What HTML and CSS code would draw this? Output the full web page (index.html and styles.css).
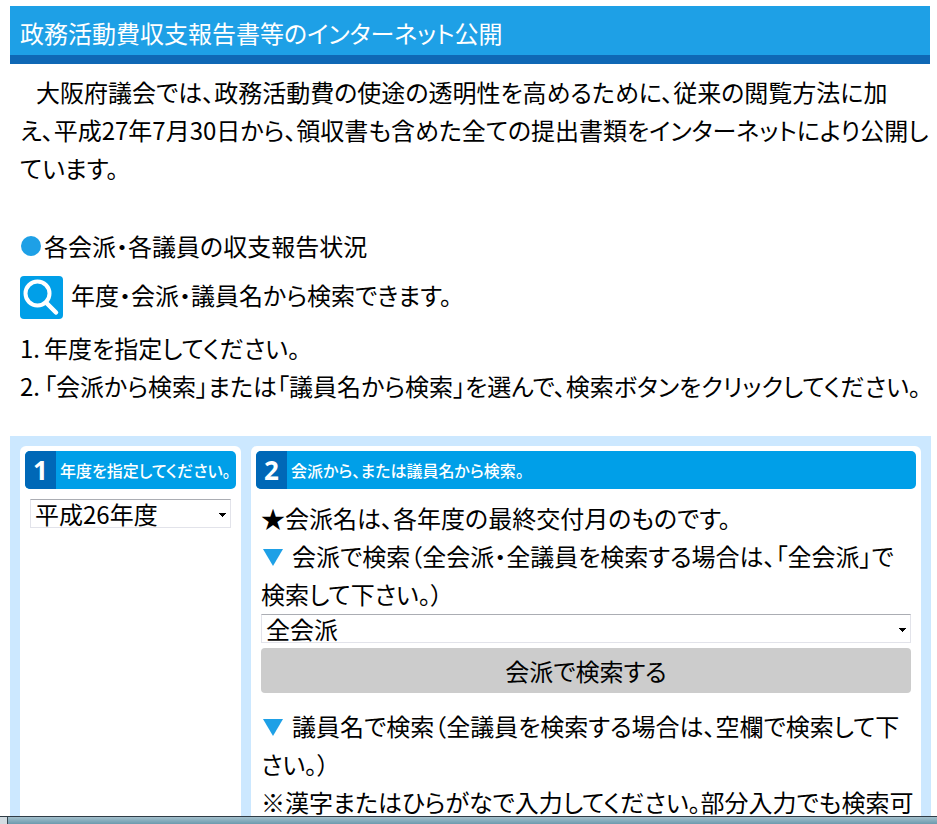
FILE: index.html
```html
<!DOCTYPE html>
<html lang="ja">
<head>
<meta charset="utf-8">
<title>政務活動費収支報告書等のインターネット公開</title>
<link rel="stylesheet" href="styles.css">
</head>
<body>
<main class="page">
  <h1 class="title">政務活動費収支報告書等のインターネット公開</h1>
  <div class="intro">
    <p class="lead">大阪府議会では、政務活動費の使途の透明性を高めるために、従来の閲覧方法に加<br>え、平成27年7月30日から、領収書も含めた全ての提出書類をインターネットにより公開し<br>ています。</p>
    <h2 class="status"><span class="dot"></span>各会派・各議員の収支報告状況</h2>
    <p class="guide">
      <svg class="guide-icon" viewBox="0 0 43 43" aria-hidden="true">
        <rect width="43" height="43" rx="4" fill="#009fe8"/>
        <circle cx="17.5" cy="17.5" r="12" fill="none" stroke="#fff" stroke-width="4"/>
        <path d="M26 26.500L36 36.500" stroke="#fff" stroke-width="4.500" stroke-linecap="round"/>
      </svg>
      <span>年度・会派・議員名から検索できます。</span>
    </p>
    <ol class="steps">
      <li><span>1.</span><span>年度を指定してください。</span></li>
      <li><span>2.</span><span>「会派から検索」または「議員名から検索」を選んで、検索ボタンをクリックしてください。</span></li>
    </ol>
  </div>
  <form class="search">
    <section class="card">
      <h3 class="card-head"><span class="num">1</span><label class="card-label" for="year">年度を指定してください。</label></h3>
      <div class="card-body">
        <select id="year" class="field"><option>平成26年度</option></select>
      </div>
    </section>
    <section class="card">
      <h3 class="card-head"><span class="num">2</span><span class="card-label">会派から、または議員名から検索。</span></h3>
      <div class="card-body">
        <p>★会派名は、各年度の最終交付月のものです。</p>
        <label class="text" for="party"><span class="mark"></span>会派で検索（全会派・全議員を検索する場合は、「全会派」で<br>検索して下さい。）</label>
        <select id="party" class="field"><option>全会派</option></select>
        <button class="submit" type="button">会派で検索する</button>
        <p><span class="mark"></span>議員名で検索（全議員を検索する場合は、空欄で検索して下<br>さい。）<br>※漢字またはひらがなで入力してください。部分入力でも検索可</p>
      </div>
    </section>
  </form>
</main>
<footer class="taskbar"></footer>
</body>
</html>
```
FILE: styles.css
```css
* { box-sizing: border-box; }

body {
  margin: 0;
  height: 100vh;
  display: flex;
  flex-direction: column;
  overflow: hidden;
  background: #fff;
  color: #000;
  font: 24px/38px "Noto Sans CJK JP", sans-serif;
  font-feature-settings: "palt";
}

h1, h2, h3, p, ol { margin: 0; padding: 0; font-size: inherit; font-weight: 400; }

.page {
  flex: 1;
  min-height: 0;
  overflow: hidden;
  padding: 6px 6px 0 10px;
}

.title {
  padding: 8px 10px 3px;
  margin-right: 1px;
  background: #1ea0e6;
  border-bottom: 9px solid #0f68b5;
  color: #fff;
}

.intro { padding: 9px 10px 0; white-space: nowrap; }
.lead { text-indent: 16px; }
.status { display: flex; align-items: center; gap: 3px; margin-top: 40px; }
.dot { width: 20px; height: 20px; margin-left: 1px; border-radius: 50%; background: #1ea0e6; }
.guide { display: flex; gap: 8px; margin: 11px 0 10px; }
.guide-icon { width: 43px; height: 43px; }
.steps { list-style: none; }
.steps li { display: flex; gap: 6px; }
.steps li span:first-child { width: 18px; }

.search {
  display: grid;
  grid-template-columns: 221px minmax(0, 1fr);
  gap: 10px;
  min-height: 500px;
  margin-top: 31px;
  padding: 10px;
  background: #cce8ff;
}

.card { padding: 5px; border-radius: 6px 6px 0 0; background: #fff; }

.card-head {
  display: flex;
  border-radius: 5px;
  overflow: hidden;
  background: #009fe8;
  color: #fff;
}

.num {
  width: 31px;
  background: #0068b7;
  font: bold 26px/38px "Noto Sans", sans-serif;
  text-align: center;
}

.card-label { padding-left: 4px; font-size: 16px; font-weight: 500; white-space: nowrap; }
.card-body { padding: 10px 5px; white-space: nowrap; }
.text { display: block; margin-bottom: 1px; }

.mark {
  display: inline-block;
  width: 20px;
  height: 17px;
  margin: 0 9px 0 2px;
  background: #1ea0e6;
  clip-path: polygon(0 0, 100% 0, 50% 100%);
}

.field {
  appearance: none;
  display: block;
  width: 100%;
  height: 29px;
  padding: 0 20px 0 4px;
  border: 1px solid #e2e3ea;
  border-top-color: #abadb3;
  border-radius: 0;
  color: #000;
  font: inherit;
  line-height: 27px;
  background:
    linear-gradient(#000, #000) right 4px top 13px / 7px 1px no-repeat,
    linear-gradient(#000, #000) right 5px top 14px / 5px 1px no-repeat,
    linear-gradient(#000, #000) right 6px top 15px / 3px 1px no-repeat,
    linear-gradient(#000, #000) right 7px top 16px / 1px 1px no-repeat,
    #fff;
}

.submit {
  display: block;
  width: 100%;
  height: 45px;
  margin: 5px 0 14px;
  padding: 0;
  border: 0;
  border-radius: 4px;
  background: #ccc;
  color: #000;
  font: inherit;
}

.taskbar {
  height: 8px;
  border-top: 1px solid #303c46;
  background: linear-gradient(90deg, #d3dce2 7px, #35464f 7px, #35464f 8px, transparent 8px), linear-gradient(#a4c0cc, #6c9aae);
}
```
